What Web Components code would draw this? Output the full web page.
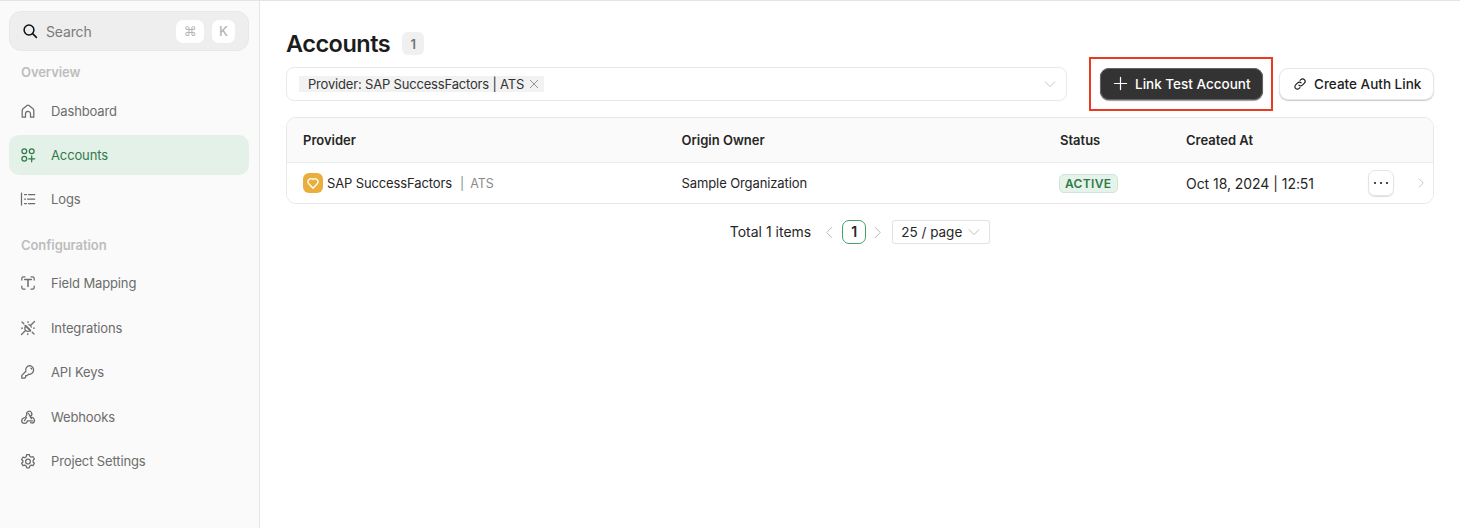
<!DOCTYPE html>
<html lang="en"><head><meta charset="utf-8"><title>Accounts</title>
<style>
html,body{margin:0;height:100%;background:#fff}
body{font-family:Inter,"Liberation Sans",sans-serif;color:#1c1c1c;overflow:hidden}
</style></head><body>
<app-shell>
  <side-bar slot="side">
    <search-box></search-box>
    <nav-label style="--top:13px">Overview</nav-label>
    <nav-item icon="home" style="--mt:10.6px">Dashboard</nav-item>
    <nav-item icon="accounts" active>Accounts</nav-item>
    <nav-item icon="logs">Logs</nav-item>
    <nav-label style="--top:18px">Configuration</nav-label>
    <nav-item icon="field" style="--mt:10px">Field Mapping</nav-item>
    <nav-item icon="plug">Integrations</nav-item>
    <nav-item icon="key">API Keys</nav-item>
    <nav-item icon="hook">Webhooks</nav-item>
    <nav-item icon="gear">Project Settings</nav-item>
  </side-bar>
  <page-title count="1">Accounts</page-title>
  <tool-bar>
    <filter-select>Provider: SAP SuccessFactors | ATS</filter-select>
    <app-button slot="actions" kind="primary" icon="plus" highlighted>Link Test Account</app-button>
    <app-button slot="actions" icon="link">Create Auth Link</app-button>
  </tool-bar>
  <accounts-table></accounts-table>
  <page-nav></page-nav>
</app-shell>
<script>
const ICONS={
 search:'<circle cx="7" cy="7" r="4.9"/><path d="M10.6 10.6 14.4 14.4"/>',
 home:'<path d="M2.200 14.200V7.400c0-.7.3-1.200.8-1.600l4-3.200c.6-.5 1.400-.5 2 0l4 3.200c.5.4.8.9.8 1.600v6.800h-3.300v-3.300a2.500 2.500 0 0 0-5 0v3.300z"/>',
 accounts:'<circle cx="4.300" cy="4.300" r="2.400"/><circle cx="11.700" cy="4.300" r="2.400"/><circle cx="4.300" cy="11.700" r="2.400"/><path d="M11.700 8.800v6M8.700 11.800h6"/>',
 logs:'<path d="M1.500 2v12M4.500 3.500h2M4.500 8h1M4.500 12.500h2M8.500 3.500h6.200M7.500 8h7.200M8.500 12.500h6.200"/>',
 field:'<path d="M1.800 5V3.500c0-.9.8-1.700 1.700-1.700H5M11 1.800h1.500c.9 0 1.700.8 1.700 1.700V5M14.200 11v1.500c0 .9-.8 1.700-1.700 1.700H11M5 14.200H3.500c-.9 0-1.700-.8-1.700-1.700V11"/><path d="M4.700 4.600h6.600M8 4.600v7" stroke-width="1.500"/>',
 plug:'<path d="M1.500 14.500 5 11M11 5l3.500-3.500M5 5.500l5.500 5.500M6.500 11a3 3 0 0 1-1.500-1.500 3 3 0 0 1 .6-3.300l.4-.5 4.500 4.500-.5.4a3 3 0 0 1-3.500.4zM8.800 4.700a3 3 0 0 1 2.500 2.500M2 2l1.800 1.800M12.200 12.200 14 14M1.500 8.200h1M8 1.500v1M13.500 8h1M7.800 13.500v1"/>',
 key:'<path d="M10 1.700a4.300 4.300 0 0 0-4.100 5.600L1.800 11.400v2.800h2.800l1-1v-1.600h1.600l1.400-1.400A4.300 4.300 0 1 0 10 1.700z"/><path d="M10.800 4.200a1.300 1.300 0 0 1 1 1"/>',
 hook:'<path d="M5.600 7.800 6.800 5.800a2.600 2.600 0 1 1 3.700 1.300M8.400 4.300l3 5.300"/><path d="M5 8.500c-2 .4-3.300 1.700-3.300 3.200 0 1.500 1.300 2.600 2.800 2.600s2.700-1 2.900-2.500h5"/><path d="M10.700 8.600a2.900 2.900 0 1 1 1.600 5.600c-.7 0-1.300-.2-1.800-.6"/><path d="M4.500 11.700 6.500 8.500"/>',
 gear:'<path d="M6.700 1.500h2.600l.5 1.800 1.500.9 1.800-.5 1.300 2.300-1.300 1.300v1.700l1.300 1.300-1.300 2.300-1.800-.5-1.500.9-.5 1.800H6.700l-.5-1.800-1.500-.9-1.800.5-1.300-2.300 1.300-1.300V7.800L1.600 6.500l1.300-2.300 1.800.5 1.500-.9z"/><circle cx="8" cy="8.600" r="2.400"/>',
 plus:'<path d="M8 1.500v13M1.500 8h13"/>',
 link:'<path d="M6.700 9.300a2.800 2.800 0 0 0 4 0l2.300-2.300a2.800 2.800 0 0 0-4-4l-.9.900"/><path d="M9.300 6.700a2.800 2.800 0 0 0-4 0L3 9a2.800 2.800 0 0 0 4 4l.9-.9"/>',
 chevron:'<path d="M2.500 5.500 8 11l5.500-5.500"/>',
 left:'<path d="M10.500 2.500 5 8l5.500 5.500"/>',
 right:'<path d="M5.500 2.500 11 8l-5.500 5.500"/>',
 close:'<path d="M3 3l10 10M13 3 3 13"/>'
};
const svg=(n,s=16,w=1.3)=>`<svg width="${s}" height="${s}" viewBox="0 0 16 16" fill="none" stroke="currentColor" stroke-width="${w}" stroke-linecap="round" stroke-linejoin="round" aria-hidden="true">${ICONS[n]}</svg>`;
class Base extends HTMLElement{
  constructor(){super();this.attachShadow({mode:'open'})}
  connectedCallback(){this.shadowRoot.innerHTML=this.render()}
}
const def=(n,f)=>customElements.define(n,class extends Base{render(){return f(this)}});

def('app-shell',()=>`<style>
:host{display:grid;grid-template-columns:260px 1fr;height:100vh;box-sizing:border-box;border-top:1px solid #e4e4e4}
main{padding:0 26px;min-width:0}
</style><slot name="side"></slot><main><slot></slot></main>`);

def('side-bar',()=>`<style>
:host{display:block;background:#fafafa;border-right:1px solid #e6e6e6;padding:10px 10px 0 9px;height:100%;box-sizing:border-box}
</style><slot></slot>`);

def('search-box',()=>`<style>
:host{display:flex;align-items:center;height:40px;box-sizing:border-box;background:#eeeeee;border:1px solid #e8e8e8;border-radius:12px;padding:0 13px 0 12px;font-size:14px;color:#7a7a7a}
svg{color:#111;margin-right:8px;flex:none}
span{flex:1;letter-spacing:-.01em}
kbd{font:500 13px Inter,sans-serif;background:#fff;border-radius:7px;height:23px;display:flex;align-items:center;justify-content:center;color:#b5b5b5;box-sizing:border-box}
.a{width:28px;margin-right:8px;font-family:"DejaVu Sans",sans-serif}.b{width:23px}
</style>${svg('search',16,1.5)}<span>Search</span><kbd class="a">⌘</kbd><kbd class="b">K</kbd>`);

def('nav-label',()=>`<style>
:host{display:block;font-size:13px;font-weight:600;line-height:16px;color:#bdbdbd;padding:var(--top) 0 0 12px;letter-spacing:-.005em}
</style><slot></slot>`);

def('nav-item',h=>`<style>
:host{display:flex;align-items:center;gap:15px;height:40px;margin-top:var(--mt,4.4px);padding-left:11px;border-radius:10px;font-size:13px;font-weight:400;color:#6c6c6c;letter-spacing:-.01em}
:host([active]){background:#e4f1e9;color:#2f7a48}
svg{flex:none}
</style>${svg(h.getAttribute('icon'),16,1.25)}<slot></slot>`);

def('page-title',h=>`<style>
:host{display:flex;align-items:center;gap:12px;height:66px;padding-top:20px;box-sizing:border-box}
h1{margin:0;font-size:23.5px;font-weight:600;line-height:46px;letter-spacing:-.5px;color:#1c1c1c}
span{width:22px;height:23px;background:#f0f0f0;border-radius:6px;display:flex;align-items:center;justify-content:center;font-size:13px;font-weight:600;color:#757575;margin-top:-1px}
</style><h1><slot></slot></h1><span>${h.getAttribute('count')}</span>`);

def('tool-bar',()=>`<style>
:host{display:flex;align-items:center;height:54px;margin-top:-10px}
.acts{display:flex;align-items:center;gap:6px;margin-left:22px}
</style><slot></slot><div class="acts"><slot name="actions"></slot></div>`);

def('filter-select',()=>`<style>
:host{flex:1;display:flex;align-items:center;height:34px;box-sizing:border-box;border:1px solid #e9e9e9;border-radius:8px;padding:0 9px 0 12px;font-size:13px;color:#333;min-width:0;letter-spacing:-.18px}
.tag{display:flex;align-items:center;gap:4px;height:16px;background:#f2f2f2;padding:0 4px 0 9px}
.tag svg{color:#777}
.grow{flex:1}
.chev{color:#bdbdbd;display:flex}
</style><div class="tag"><slot></slot>${svg('close',12,1)}</div><div class="grow"></div><div class="chev">${svg('chevron',14,1)}</div>`);

def('app-button',h=>{
 const p=h.getAttribute('kind')==='primary',hl=h.hasAttribute('highlighted');
 return `<style>
:host{display:block;${hl?'padding:9px 8px 9px 9px;border:2px solid #ea3a1f;':''}}
.b{display:flex;align-items:center;height:32px;box-sizing:border-box;border-radius:9px;font-size:13.5px;font-weight:500;white-space:nowrap;padding-bottom:1px;
${p?'background:#333;color:#fff;width:163px;padding-left:13px;gap:7px;box-shadow:0 0 0 1px #666 inset,0 1px 1px #999;':'background:#fff;color:#1c1c1c;width:155px;padding-left:13px;gap:7px;border:1px solid #e6e6e6;box-shadow:0 1px 1px #ccc;'}}
svg{flex:none}
</style><div class="b">${svg(h.getAttribute('icon'),p?15:14,1.3)}<slot></slot></div>`});

def('accounts-table',()=>`<style>
:host{display:block;margin-top:6px;border:1px solid #e8e8e8;border-radius:10px;overflow:hidden;font-size:13px;color:#262626}
.r{display:grid;grid-template-columns:378.500px 378.500px 126px 182px 1fr;align-items:center;padding-left:16px}
.h{height:44px;background:#fafafa;border-bottom:1px solid #ececec;font-weight:600}
.d{height:40px;background:#fff}
.d>div:nth-child(2){letter-spacing:-.1px}
.d>div:nth-child(4){font-size:14px;letter-spacing:-.05px}
.n{display:flex;align-items:center;gap:4px;letter-spacing:-.13px}
.logo{width:20px;height:20px;border-radius:6px;background:#e9ae3c;display:flex;align-items:center;justify-content:center;color:#fff}
.m{color:#8b8b8b;margin-left:4px;word-spacing:3px;font-size:12.500px}
.s{display:inline-block;font-size:12px;font-weight:600;letter-spacing:.03em;color:#2f7a48;background:#e6f3ea;border:1px solid #cfe6d6;border-radius:5px;padding:0 5px;line-height:17px;margin-left:-1px}
.act{display:flex;align-items:center}
.more{width:26px;height:26px;box-sizing:border-box;border:1px solid #e4e4e4;border-radius:7px;box-shadow:0 1px 1px #ddd;display:flex;align-items:center;justify-content:center;gap:4px}
.more i{width:2px;height:2px;border-radius:50%;background:#111}
.chev{color:#b5b5b5;margin-left:21px;display:flex}
</style>
<div class="r h"><div>Provider</div><div>Origin Owner</div><div>Status</div><div>Created At</div><div></div></div>
<div class="r d"><div class="n"><span class="logo"><svg width="14" height="14" viewBox="0 0 16 16" fill="none" stroke="currentColor" stroke-width="1.500" stroke-linejoin="round"><path d="M8 14 2.700 8.300A3.500 3.500 0 0 1 8 3.900a3.500 3.500 0 0 1 5.300 4.400z"/></svg></span><span>SAP SuccessFactors</span><span class="m">| ATS</span></div>
<div>Sample Organization</div><div><span class="s">ACTIVE</span></div><div>Oct 18, 2024 | 12:51</div>
<div class="act"><div class="more"><i></i><i></i><i></i></div><span class="chev">${svg('right',12,1)}</span></div></div>`);

def('page-nav',()=>`<style>
:host{display:flex;align-items:center;justify-content:center;margin-top:16px;height:24px;font-size:14px;color:#262626}
.arr{color:#b5b5b5;display:flex}
.cur{width:24px;height:24px;box-sizing:border-box;border:1px solid #3fa567;border-radius:7px;display:flex;align-items:center;justify-content:center;font-weight:600;margin:0 4px 0 5px}
.sel{display:flex;align-items:center;height:24px;width:98px;box-sizing:border-box;border:1px solid #e2e2e2;border-radius:3px;padding-left:8px;margin-left:7px;gap:5px;font-size:13.500px}
.sel svg{color:#b5b5b5}
.t{margin-right:11px}
span,.sel{line-height:22px}
</style><span class="t">Total 1 items</span><span class="arr">${svg('left',15,1)}</span><span class="cur">1</span><span class="arr">${svg('right',15,1)}</span><div class="sel">25 / page ${svg('chevron',14,1)}</div>`);
</script>
</body></html>
